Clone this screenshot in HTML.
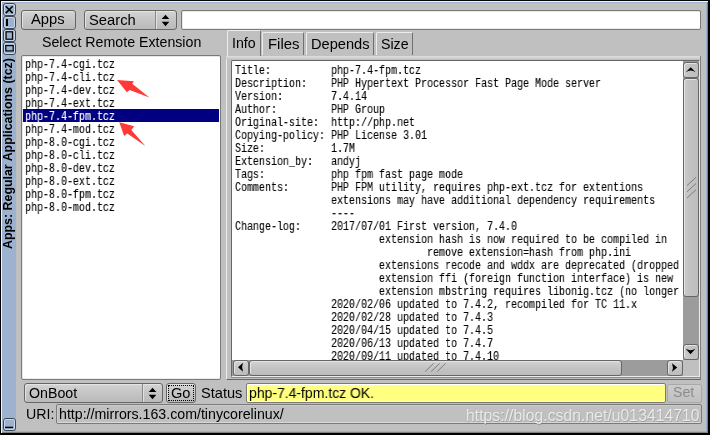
<!DOCTYPE html>
<html><head><meta charset="utf-8">
<style>
*{margin:0;padding:0;box-sizing:border-box}
html,body{width:710px;height:435px;overflow:hidden;background:#fff}
body{position:relative;font-family:"Liberation Sans",sans-serif;-webkit-font-smoothing:antialiased}
.t,.mono{will-change:transform}
.a{position:absolute}
.t{white-space:pre;font-family:"Liberation Sans",sans-serif}
.btn{border:1px solid #666;border-radius:3px;background:linear-gradient(#d4d4d4,#c6c6c6 45%,#bababa);box-shadow:inset 1px 1px 0 #e4e4e4}
.inp{border:1px solid #7a7a7a;border-radius:2px;background:#fff;box-shadow:inset 1px 1px 0 #e8e8e8,inset 0 -1px 0 #ececec}
.mono{font-family:"Liberation Mono",monospace;font-size:12px;line-height:13px;white-space:pre;color:#000;transform-origin:0 0;transform:scaleX(0.8333);-webkit-text-stroke:0.12px #000}
.tab{border-left:1px solid #ececec;border-top:1px solid #ececec;border-right:1px solid #707070;background:#c0c0c0;border-radius:2px 2px 0 0}
.sb{border:1px solid #666;border-radius:3px;background:linear-gradient(90deg,#cacaca,#c2c2c2 40%,#bebebe);box-shadow:inset 1px 1px 0 #e4e4e4}
.sbh{border:1px solid #666;border-radius:3px;background:linear-gradient(#d2d2d2,#c4c4c4 50%,#bcbcbc);box-shadow:inset 1px 1px 0 #e4e4e4}
</style></head><body>
<div class="a" style="left:0;top:0;width:710px;height:435px;background:#000"></div>
<div class="a" style="left:1px;top:1px;width:707px;height:432px;background:#f4f4f4"></div>
<div class="a" style="left:2px;top:2px;width:706px;height:431px;background:#808080"></div>
<div class="a" style="left:2px;top:2px;width:705px;height:430px;background:#9cb2cf"></div>
<div class="a" style="left:16px;top:3px;width:690px;height:428px;background:#c0c0c0"></div>
<svg class="a" style="left:3px;top:3px" width="13" height="13" viewBox="0 0 13 13"><rect x="0.5" y="0.5" width="12" height="12" rx="2.5" fill="#9cb2cf" stroke="#40464e" stroke-width="1"/><rect x="1.5" y="1.5" width="10" height="10" rx="1.5" fill="none" stroke="#c8d6e8" stroke-width="1"/><path d="M2.7 3.3 L9.7 10.1 M9.7 3.3 L2.7 10.1" stroke="#000" stroke-width="1.6"/></svg>
<svg class="a" style="left:3px;top:16px" width="13" height="13" viewBox="0 0 13 13"><rect x="0.5" y="0.5" width="12" height="12" rx="2.5" fill="#9cb2cf" stroke="#40464e" stroke-width="1"/><rect x="1.5" y="1.5" width="10" height="10" rx="1.5" fill="none" stroke="#c8d6e8" stroke-width="1"/><rect x="3" y="3" width="2" height="7" fill="#000"/></svg>
<svg class="a" style="left:3px;top:29px" width="13" height="13" viewBox="0 0 13 13"><rect x="0.5" y="0.5" width="12" height="12" rx="2.5" fill="#9cb2cf" stroke="#40464e" stroke-width="1"/><rect x="1.5" y="1.5" width="10" height="10" rx="1.5" fill="none" stroke="#c8d6e8" stroke-width="1"/><rect x="3.1" y="2.8" width="6.4" height="7.4" fill="none" stroke="#000" stroke-width="1.2"/></svg>
<svg class="a" style="left:3px;top:42px" width="13" height="13" viewBox="0 0 13 13"><rect x="0.5" y="0.5" width="12" height="12" rx="2.5" fill="#9cb2cf" stroke="#40464e" stroke-width="1"/><rect x="1.5" y="1.5" width="10" height="10" rx="1.5" fill="none" stroke="#c8d6e8" stroke-width="1"/><rect x="2.8" y="3.6" width="7.4" height="5.3" fill="none" stroke="#000" stroke-width="1.2"/></svg>
<svg class="a" style="left:3px;top:418px" width="13" height="13" viewBox="0 0 13 13"><rect x="0.5" y="0.5" width="12" height="12" rx="2.5" fill="#9cb2cf" stroke="#40464e" stroke-width="1"/><rect x="1.5" y="1.5" width="10" height="10" rx="1.5" fill="none" stroke="#c8d6e8" stroke-width="1"/><rect x="2" y="8.7" width="8" height="1.4" fill="#000"/></svg>
<div class="a t" style="left:2.3px;top:248.6px;width:192px;height:12px;font-size:12.4px;line-height:12px;font-weight:bold;color:#000;transform-origin:0 0;transform:rotate(-90deg) translateY(0px)">Apps: Regular Applications (tcz)</div>
<div class="a btn" style="left:21px;top:10px;width:55px;height:20px"></div>
<div class="a t" style="left:31px;top:12.48px;font-size:14.2px;line-height:14.2px;color:#000;transform:scaleX(1.04);transform-origin:0 0;">Apps</div>
<div class="a btn" style="left:84px;top:10px;width:93px;height:20px"></div>
<div class="a" style="left:155px;top:11px;width:1px;height:18px;background:#8a8a8a"></div><div class="a" style="left:156px;top:11px;width:1px;height:18px;background:#e0e0e0"></div>
<svg class="a" style="left:160px;top:14px" width="12" height="13" viewBox="0 0 12 13"><path d="M1.7 5 L5.5 0.8 L9.3 5 Z M1.7 7.8 L9.3 7.8 L5.5 12.3 Z" fill="#000"/></svg>
<div class="a t" style="left:88.6px;top:12.88px;font-size:14.2px;line-height:14.2px;color:#000;transform:scaleX(1.04);transform-origin:0 0;">Search</div>
<div class="a inp" style="left:181px;top:10px;width:520px;height:20px"></div>
<div class="a t" style="left:42px;top:34.68px;font-size:14.2px;line-height:14.2px;color:#000;">Select Remote Extension</div>
<div class="a inp" style="left:21px;top:55px;width:200px;height:325px"></div>
<div class="a" style="left:23px;top:109px;width:196px;height:13px;background:#000080"></div>
<div class="a mono" style="left:24.6px;top:58.9px">php-7.4-cgi.tcz
php-7.4-cli.tcz
php-7.4-dev.tcz
php-7.4-ext.tcz
<span style="color:#fff;-webkit-text-stroke-color:#fff">php-7.4-fpm.tcz</span>
php-7.4-mod.tcz
php-8.0-cgi.tcz
php-8.0-cli.tcz
php-8.0-dev.tcz
php-8.0-ext.tcz
php-8.0-fpm.tcz
php-8.0-mod.tcz</div>
<svg class="a" style="left:0;top:0" width="710" height="435" viewBox="0 0 710 435"><path d="M117 80.1 L133.9 81.3 L132.2 83.8 L149.4 97.5 L129.7 90.1 L126.9 92.3 Z" fill="#ff3838"/><path d="M119.3 122.2 L134.2 126.3 L131.3 129.9 L145.4 146 L127.3 133.5 L124.1 135.9 Z" fill="#ff3838"/></svg>
<div class="a" style="left:226px;top:56px;width:475px;height:324px;border-left:1px solid #ececec;border-right:1px solid #808080;border-bottom:1px solid #666;background:#c0c0c0"></div>
<div class="a" style="left:226px;top:56px;width:474px;height:3px;background:linear-gradient(#e0e0e0,#d4d4d4 50%,#c8c8c8)"></div>
<div class="a" style="left:231px;top:377px;width:469px;height:1px;background:#8c8c8c"></div>
<div class="a tab" style="left:227px;top:30px;width:34px;height:26px"></div>

<div class="a t" style="left:232.4px;top:36.18px;font-size:14.2px;line-height:14.2px;color:#000;">Info</div>
<div class="a tab" style="left:262px;top:32px;width:42px;height:23px"></div>
<div class="a t" style="left:267.5px;top:36.58px;font-size:14.2px;line-height:14.2px;color:#000;transform:scaleX(1.05);transform-origin:0 0;">Files</div>
<div class="a tab" style="left:306px;top:32px;width:68px;height:23px"></div>
<div class="a t" style="left:310.6px;top:36.88px;font-size:14.2px;line-height:14.2px;color:#000;transform:scaleX(1.03);transform-origin:0 0;">Depends</div>
<div class="a tab" style="left:376px;top:32px;width:37px;height:23px"></div>
<div class="a t" style="left:380.7px;top:36.88px;font-size:14.2px;line-height:14.2px;color:#000;">Size</div>
<div class="a" style="left:231px;top:60px;width:469px;height:317px;background:#fff;border-left:1px solid #666;border-top:1px solid #666;border-right:1px solid #ececec;border-bottom:1px solid #ececec;border-radius:2px 0 0 0"></div>
<div class="a" style="left:232px;top:61px;width:451px;height:299px;overflow:hidden"><div class="a mono" style="left:2.5px;top:3.5px">Title:          php-7.4-fpm.tcz
Description:    PHP Hypertext Processor Fast Page Mode server
Version:        7.4.14
Author:         PHP Group
Original-site:  http://php.net
Copying-policy: PHP License 3.01
Size:           1.7M
Extension_by:   andyj
Tags:           php fpm fast page mode
Comments:       PHP FPM utility, requires php-ext.tcz for extentions
                extensions may have additional dependency requirements
                ----
Change-log:     2017/07/01 First version, 7.4.0
                        extension hash is now required to be compiled in
                                remove extension=hash from php.ini
                        extensions recode and wddx are deprecated (dropped
                        extension ffi (foreign function interface) is new
                        extension mbstring requires libonig.tcz (no longer
                2020/02/06 updated to 7.4.2, recompiled for TC 11.x
                2020/02/28 updated to 7.4.3
                2020/04/15 updated to 7.4.5
                2020/06/13 updated to 7.4.7
                2020/09/11 updated to 7.4.10</div></div>
<div class="a" style="left:683px;top:61px;width:16px;height:299px;background:#9c9c9c"></div>
<div class="a sb" style="left:683px;top:62px;width:16px;height:16px"></div>
<svg class="a" style="left:683px;top:62px" width="16" height="16" viewBox="0 0 16 16"><path d="M2.6 10.2 L7.8 5.3 L12.6 10.2 Q7.8 6.8 2.6 10.2 Z" fill="#000"/></svg>
<div class="a sb" style="left:683px;top:78px;width:16px;height:219px"></div>
<svg class="a" style="left:683px;top:175px" width="16" height="25" viewBox="0 0 16 25"><path d="M4 10.6 L13 2.3 M4 16.8 L13 8.5 M4 23 L13 14.7" stroke="#6a6a6a" stroke-width="0.8"/></svg>
<div class="a sb" style="left:683px;top:344px;width:16px;height:16px"></div>
<svg class="a" style="left:683px;top:345px" width="16" height="15" viewBox="0 0 16 15"><path d="M2.6 3.8 Q7.8 6.6 12.4 3.8 L7.6 9.3 Z" fill="#000"/></svg>
<div class="a" style="left:232px;top:360px;width:451px;height:16px;background:#9c9c9c"></div>
<div class="a sbh" style="left:233px;top:360px;width:16px;height:16px"></div>
<svg class="a" style="left:233px;top:360px" width="16" height="16" viewBox="0 0 16 16"><path d="M5 7.2 L10 2.8 Q8.2 7.2 10 11.7 Z" fill="#000"/></svg>
<div class="a sbh" style="left:249px;top:360px;width:373px;height:16px"></div>
<svg class="a" style="left:410px;top:361px" width="40" height="15" viewBox="0 0 40 15"><path d="M15.2 10.5 L23.7 2.4 M21.2 10.5 L29.7 2.4 M27.2 10.5 L35.7 2.4" stroke="#6a6a6a" stroke-width="0.8"/></svg>
<div class="a sbh" style="left:667px;top:360px;width:16px;height:16px"></div>
<svg class="a" style="left:668px;top:360px" width="15" height="16" viewBox="0 0 15 16"><path d="M9.2 7.5 L4 3.2 Q5.8 7.5 4 11.8 Z" fill="#000"/></svg>
<div class="a" style="left:683px;top:360px;width:16px;height:16px;background:#c0c0c0"></div>
<div class="a btn" style="left:24px;top:383px;width:139px;height:20px"></div>
<div class="a" style="left:142px;top:384px;width:1px;height:18px;background:#8a8a8a"></div><div class="a" style="left:143px;top:384px;width:1px;height:18px;background:#e0e0e0"></div>
<svg class="a" style="left:147px;top:387px" width="12" height="13" viewBox="0 0 12 13"><path d="M1.7 5 L5.5 0.8 L9.3 5 Z M1.7 7.8 L9.3 7.8 L5.5 12.3 Z" fill="#000"/></svg>
<div class="a t" style="left:29.2px;top:385.58px;font-size:14.2px;line-height:14.2px;color:#000;">OnBoot</div>
<div class="a btn" style="left:166px;top:383px;width:30px;height:20px"></div>
<div class="a" style="left:168px;top:385px;width:26px;height:16px;border:1px dotted #000"></div>
<div class="a t" style="left:171.2px;top:385.58px;font-size:14.2px;line-height:14.2px;color:#000;transform:scaleX(1.03);transform-origin:0 0;">Go</div>
<div class="a t" style="left:201.4px;top:385.58px;font-size:14.2px;line-height:14.2px;color:#000;transform:scaleX(1.03);transform-origin:0 0;">Status</div>
<div class="a inp" style="left:246px;top:383px;width:420px;height:20px;background:#ffff80;box-shadow:inset 1px 1px 0 #fff,inset 0 -1px 0 #fff"></div>
<div class="a t" style="left:249px;top:385.58px;font-size:14.2px;line-height:14.2px;color:#000;transform:scaleX(0.985);transform-origin:0 0;">php-7.4-fpm.tcz OK.</div>
<div class="a" style="left:667px;top:384px;width:35px;height:19px;border:1px solid #a8a8a8;border-radius:2px;background:linear-gradient(#cccccc,#c0c0c0)"></div>
<div class="a t" style="left:673px;top:385.18px;font-size:14.2px;line-height:14.2px;color:#8c8c8c;">Set</div>
<div class="a t" style="left:25.8px;top:406.98px;font-size:14.2px;line-height:14.2px;color:#000;">URI:</div>
<div class="a inp" style="left:56px;top:404px;width:646px;height:20px;background:#c0c0c0;box-shadow:inset 1px 1px 0 #cccccc,inset 0 -1px 0 #d8d8d8"></div>
<div class="a t" style="left:58.8px;top:406.98px;font-size:14.2px;line-height:14.2px;color:#000;">http://mirrors.163.com/tinycorelinux/</div>
<div class="a t" style="left:465.6px;top:408.13px;font-size:15.8px;line-height:15.8px;color:rgba(255,255,255,0.72);text-shadow:0.5px 0.5px 0.6px rgba(0,0,0,0.18);">https://blog.csdn.net/u013414710</div>
</body></html>
